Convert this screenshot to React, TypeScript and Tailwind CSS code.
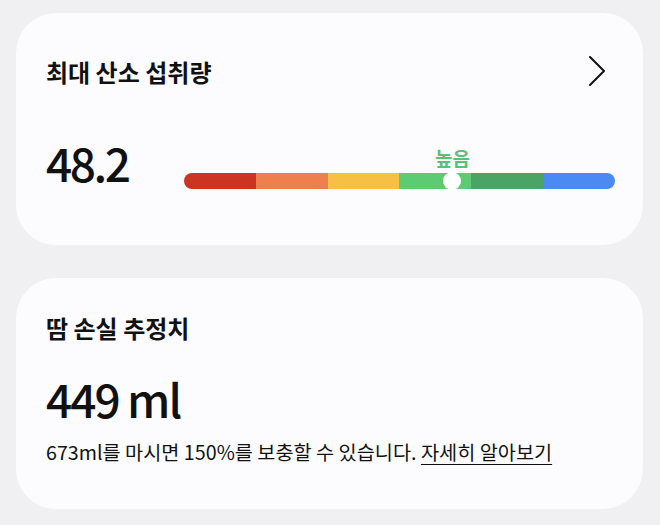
import React from "react";

const segs = ["#cc3322", "#ee8050", "#f5c044", "#5ccb74", "#4ba366", "#4a8af2"];

export default function App() {
  return (
    <div
      className="w-[660px] h-[525px] bg-[#f0f0f2] pt-[13px] px-[16px] flex flex-col gap-[33px]"
      style={{ fontFamily: '"Noto Sans CJK KR", "Noto Sans", sans-serif' }}
    >
      <div className="h-[232px] w-[627px] rounded-[40px] bg-[#fcfcfe] pl-[30px] pr-[28px] pt-[41px] flex flex-col">
        <div className="flex items-center justify-between h-[36px]">
          <div className="text-[24px] font-bold text-[#111] leading-none">최대 산소 섭취량</div>
          <svg width="20" height="32" viewBox="0 0 20 32" className="mr-[10px]">
            <path d="M5 1 L19 15 L5 29" fill="none" stroke="#111" strokeWidth="2" strokeLinecap="round" strokeLinejoin="round" />
          </svg>
        </div>
        <div className="flex items-end mt-[49px]">
          <div className="text-[46px] leading-none font-medium text-[#111] tracking-[-2.5px] w-[138px] pb-[4px]">48.2</div>
          <div className="relative w-[431px] h-[16px]">
            <div className="w-full h-full rounded-full overflow-hidden flex">
              {segs.map((c) => (
                <div key={c} className="flex-1 h-full" style={{ background: c }} />
              ))}
            </div>
            <div className="absolute left-[259px] top-[-1px] w-[18px] h-[18px] rounded-full bg-white" />
            <div className="absolute left-[251px] top-[-25px] text-[19px] font-bold text-[#5cbf78] leading-none">높음</div>
          </div>
        </div>
      </div>

      <div className="h-[231px] w-[627px] rounded-[40px] bg-[#fcfcfe] pl-[30px] pt-[38px] flex flex-col">
        <div className="text-[24px] font-bold text-[#111] leading-none">땀 손실 추정치</div>
        <div className="mt-[35px] text-[46px] leading-none font-medium text-[#111] tracking-[-2px]">449 ml</div>
        <div className="mt-[21px] text-[19.7px] text-[#111] leading-none">
          673ml를 마시면 150%를 보충할 수 있습니다. <span className="underline underline-offset-[4px]">자세히 알아보기</span>
        </div>
      </div>
    </div>
  );
}
